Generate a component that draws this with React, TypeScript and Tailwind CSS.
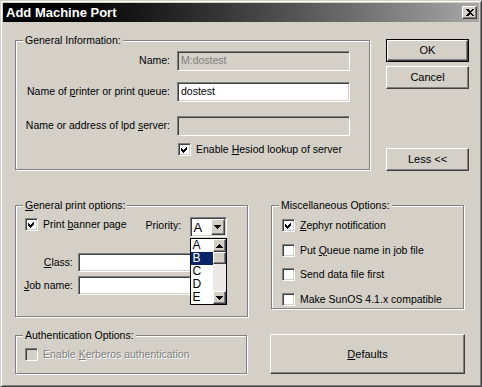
import React from 'react';

const raised =
  'border border-t-white border-l-white border-b-[#404040] border-r-[#404040] shadow-[inset_-1px_-1px_0_#808080] bg-[#d4d0c8]';
const sunken =
  'border border-t-[#808080] border-l-[#808080] border-b-white border-r-white shadow-[inset_1px_1px_0_#404040,inset_-1px_-1px_0_#d4d0c8]';
const disabledText = 'text-[#808080] [text-shadow:1px_1px_0_#fff]';

const CheckMark = () => (
  <svg width="13" height="13" viewBox="0 0 13 13" className="absolute -left-px -top-px" shapeRendering="crispEdges">
    <path d="M3 5 L5 7 L9 3 L9 6 L5 10 L3 8 Z" fill="#000" />
  </svg>
);

const Check = ({ checked = false, disabled = false }: { checked?: boolean; disabled?: boolean }) => (
  <div className={`relative w-[13px] h-[13px] shrink-0 ${sunken} ${disabled ? 'bg-[#d4d0c8]' : 'bg-white'}`}>
    {checked && <CheckMark />}
  </div>
);

const CheckRow = ({ checked, disabled, children }: { checked?: boolean; disabled?: boolean; children: React.ReactNode }) => (
  <div className="flex items-center h-[13px]">
    <Check checked={checked} disabled={disabled} />
    <span className={`ml-[5px] leading-[13px] whitespace-nowrap ${disabled ? disabledText : ''}`}>{children}</span>
  </div>
);

const Group = ({ label, className, children }: { label: React.ReactNode; className: string; children?: React.ReactNode }) => (
  <div className={`relative border border-[#808080] shadow-[inset_1px_1px_0_#fff,1px_1px_0_#fff] ${className}`}>
    <span className="absolute left-[7px] -top-[7px] bg-[#d4d0c8] px-[2px] leading-[13px] whitespace-nowrap">{label}</span>
    {children}
  </div>
);

const Field = ({ value = '', disabled = false, className }: { value?: string; disabled?: boolean; className: string }) => (
  <div
    className={`${sunken} ${disabled ? 'bg-[#d4d0c8] text-[#808080]' : 'bg-white'} flex items-center pl-[3px] ${className}`}
  >
    {value}
  </div>
);

const Arrow = ({ up = false }: { up?: boolean }) => (
  <svg width="7" height="4" viewBox="0 0 7 4" shapeRendering="crispEdges">
    <path d={up ? 'M3 0 H4 V1 H5 V2 H6 V3 H7 V4 H0 V3 H1 V2 H2 V1 H3 Z' : 'M0 0 H7 V1 H6 V2 H5 V3 H4 V4 H3 V3 H2 V2 H1 V1 H0 Z'} fill="#000" />
  </svg>
);

const PriorityCombo = () => (
  <div className="relative w-[37px] h-[20px]">
    <div className={`${sunken} bg-white w-full h-full flex items-center pl-[3px]`}>
      <span className="text-[13px] leading-none">A</span>
      <div className={`${raised} absolute right-[2px] top-[2px] w-[14px] h-[16px] flex items-center justify-center`}>
        <Arrow />
      </div>
    </div>
    <div className="absolute left-0 top-[21px] z-10 w-[37px] h-[67px] border border-black bg-white flex">
      <div className="flex-1 flex flex-col text-[12px] leading-[13px]">
        <div className="h-[13px] pl-[2px]">A</div>
        <div className="h-[13px] pl-[2px] bg-[#0a246a] text-white">B</div>
        <div className="h-[13px] pl-[2px]">C</div>
        <div className="h-[13px] pl-[2px]">D</div>
        <div className="h-[13px] pl-[2px]">E</div>
      </div>
      <div className="w-[13px] flex flex-col bg-[#ebe9e5]">
        <div className={`${raised} h-[13px] flex items-center justify-center`}>
          <Arrow up />
        </div>
        <div className={`${raised} h-[12px]`} />
        <div className="flex-1" />
        <div className={`${raised} h-[13px] flex items-center justify-center`}>
          <Arrow />
        </div>
      </div>
    </div>
  </div>
);

export default function App() {
  return (
    <div className="w-[482px] h-[387px] bg-[#d4d0c8] border border-t-[#d4d0c8] border-l-[#d4d0c8] border-b-[#404040] border-r-[#404040] shadow-[inset_1px_1px_0_#fff,inset_-1px_-1px_0_#808080] p-[2px] font-['Liberation_Sans',Arial,sans-serif] text-[10.5px] text-black overflow-hidden">
      {/* title bar */}
      <div className="h-[19px] flex items-center justify-between pl-[3px] pr-[2px] bg-gradient-to-r from-black to-[#a8a8a8]">
        <span className="text-white font-bold text-[13px] leading-none">Add Machine Port</span>
        <div className={`${raised} w-[15px] h-[13px] flex items-center justify-center`}>
          <svg width="8" height="7" viewBox="0 0 8 7" shapeRendering="crispEdges">
            <path d="M0 0 H2 L4 2 L6 0 H8 L5 3.5 L8 7 H6 L4 5 L2 7 H0 L3 3.5 Z" fill="#000" />
          </svg>
        </div>
      </div>

      <div className="pl-[12px]">
        {/* top row */}
        <div className="flex items-start mt-[17px]">
          <Group label="General Information:" className="mt-px w-[355px] h-[130px]">
            <div className="flex flex-col pt-[10px]">
              <div className="flex items-center h-[20px]">
                <span className="w-[154px] text-right">Name:</span>
                <Field value="M:dostest" disabled className="ml-[7px] w-[173px] h-[20px]" />
              </div>
              <div className="flex items-center h-[20px] mt-[11px]">
                <span className="w-[154px] text-right">
                  Name of <u>p</u>rinter or print queue:
                </span>
                <Field value="dostest" className="ml-[7px] w-[173px] h-[20px]" />
              </div>
              <div className="flex items-center h-[20px] mt-[14px]">
                <span className="w-[154px] text-right">
                  Name or address of lpd <u>s</u>erver:
                </span>
                <Field disabled className="ml-[7px] w-[173px] h-[20px]" />
              </div>
              <div className="ml-[162px] mt-[7px]">
                <CheckRow checked>
                  Enable <u>H</u>esiod lookup of server
                </CheckRow>
              </div>
            </div>
          </Group>

          <div className="ml-[16px] flex flex-col w-[83px]">
            <div className="border border-black">
              <div className={`${raised} h-[21px] flex items-center justify-center text-[11px]`}>OK</div>
            </div>
            <div className={`${raised} h-[23px] mt-[4px] flex items-center justify-center text-[11px]`}>Cancel</div>
            <div className={`${raised} h-[23px] mt-[59px] flex items-center justify-center text-[11px]`}>Less &lt;&lt;</div>
          </div>
        </div>

        {/* middle row */}
        <div className="flex items-start mt-[34px]">
          <Group
            label={
              <>
                <u>G</u>eneral print options:
              </>
            }
            className="w-[233px] h-[112px]"
          >
            <div className="flex items-start pt-[11px] pl-[9px]">
              <div className="mt-px">
                <CheckRow checked>
                  Print <u>b</u>anner page
                </CheckRow>
              </div>
              <span className="ml-[19px] mt-[2px] leading-[13px] w-[44px]">Priority:</span>
              <PriorityCombo />
            </div>
            <div className="flex items-center mt-[16px] h-[19px]">
              <span className="w-[57px] text-right">
                <u>C</u>lass:
              </span>
              <Field className="ml-[5px] w-[148px] h-[19px]" />
            </div>
            <div className="flex items-center mt-[4px] h-[19px]">
              <span className="w-[57px] text-right">
                <u>J</u>ob name:
              </span>
              <Field className="ml-[5px] w-[148px] h-[19px]" />
            </div>
          </Group>

          <Group label="Miscellaneous Options:" className="ml-[23px] w-[193px] h-[104px]">
            <div className="flex flex-col pt-[13px] pl-[10px]">
              <CheckRow checked>
                <u>Z</u>ephyr notification
              </CheckRow>
              <div className="mt-[12px]">
                <CheckRow>
                  Put <u>Q</u>ueue name in job file
                </CheckRow>
              </div>
              <div className="mt-[11px]">
                <CheckRow>Send data file first</CheckRow>
              </div>
              <div className="mt-[12px]">
                <CheckRow>Make SunOS 4.1.x compatible</CheckRow>
              </div>
            </div>
          </Group>
        </div>

        {/* bottom row */}
        <div className="flex items-start mt-[17px]">
          <Group label="Authentication Options:" className="mt-px w-[232px] h-[39px]">
            <div className="pt-[12px] pl-[9px]">
              <CheckRow disabled>
                Enable <u>K</u>erberos authentication
              </CheckRow>
            </div>
          </Group>
          <div className={`${raised} ml-[23px] w-[195px] h-[40px] flex items-center justify-center text-[11px]`}>
            <span>
              <u>D</u>efaults
            </span>
          </div>
        </div>
      </div>
    </div>
  );
}
